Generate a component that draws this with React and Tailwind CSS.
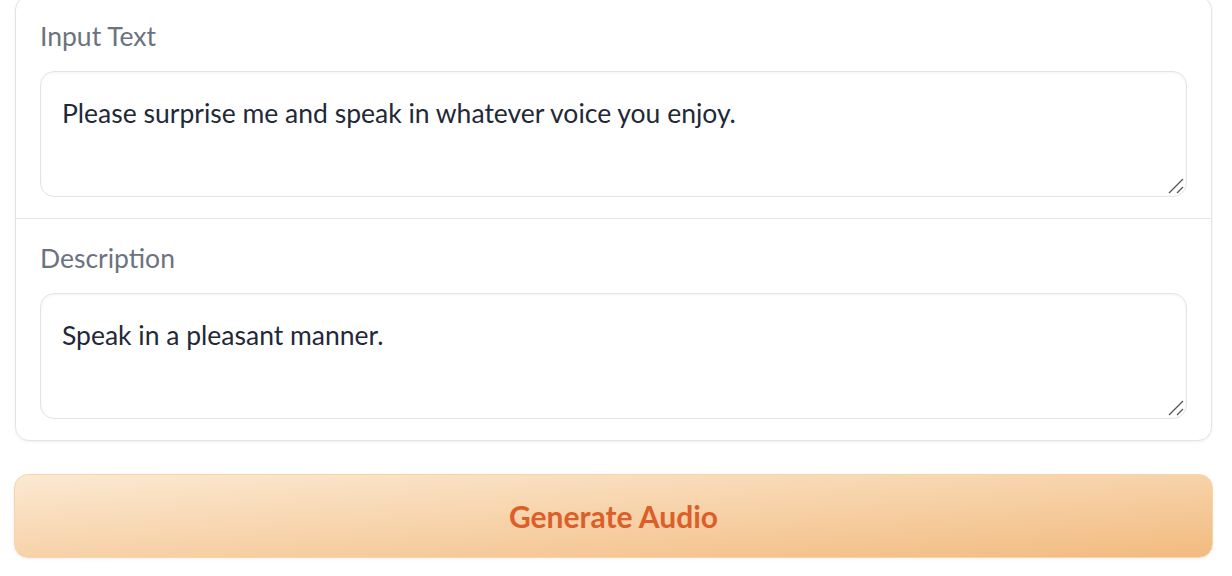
const font = { fontFamily: 'Lato, "Noto Sans", sans-serif' };

function Field({ label, value, first }) {
  return (
    <div className={`px-[24px] pt-[24px] pb-[21px] ${first ? '' : 'border-t border-[#e4e4e7]'}`}>
      <div className="text-[26.5px] leading-[30px] text-[#6b7280] mb-[20px]">{label}</div>
      <div className="relative">
        <textarea
          readOnly
          defaultValue={value}
          className="block w-full h-[126px] rounded-[14px] border border-[#e4e4e7] bg-white px-[21px] pt-[25px] text-[26.5px] leading-[32px] text-[#1f2937] shadow-[inset_0_1px_3px_rgba(0,0,0,0.05)] outline-none resize-none"
          style={font}
        />
        <svg className="absolute right-[3px] bottom-[3px] w-[16px] h-[16px]" viewBox="0 0 16 16">
          <path d="M1 15 L15 1 M9 15 L15 9" stroke="#555" strokeWidth="1.3" />
        </svg>
      </div>
    </div>
  );
}

export default function App() {
  return (
    <div className="min-h-screen bg-white pl-[14px] pr-[19px]" style={font}>
      <div className="-mt-[4px] mx-[1px] rounded-[14px] border border-[#e4e4e7] bg-white shadow-[0_1px_3px_rgba(0,0,0,0.06)]">
        <Field first label="Input Text" value="Please surprise me and speak in whatever voice you enjoy." />
        <Field label="Description" value="Speak in a pleasant manner." />
      </div>
      <button
        className="mt-[33px] w-full h-[84px] rounded-[14px] border border-[#f8d5a8] bg-gradient-to-br from-[#fbe9d2] to-[#f2bb7f] text-[30px] leading-[36px] font-bold text-[#dc5f2a] shadow-[0_1px_3px_rgba(0,0,0,0.06)]"
        style={font}
      >
        Generate Audio
      </button>
    </div>
  );
}
